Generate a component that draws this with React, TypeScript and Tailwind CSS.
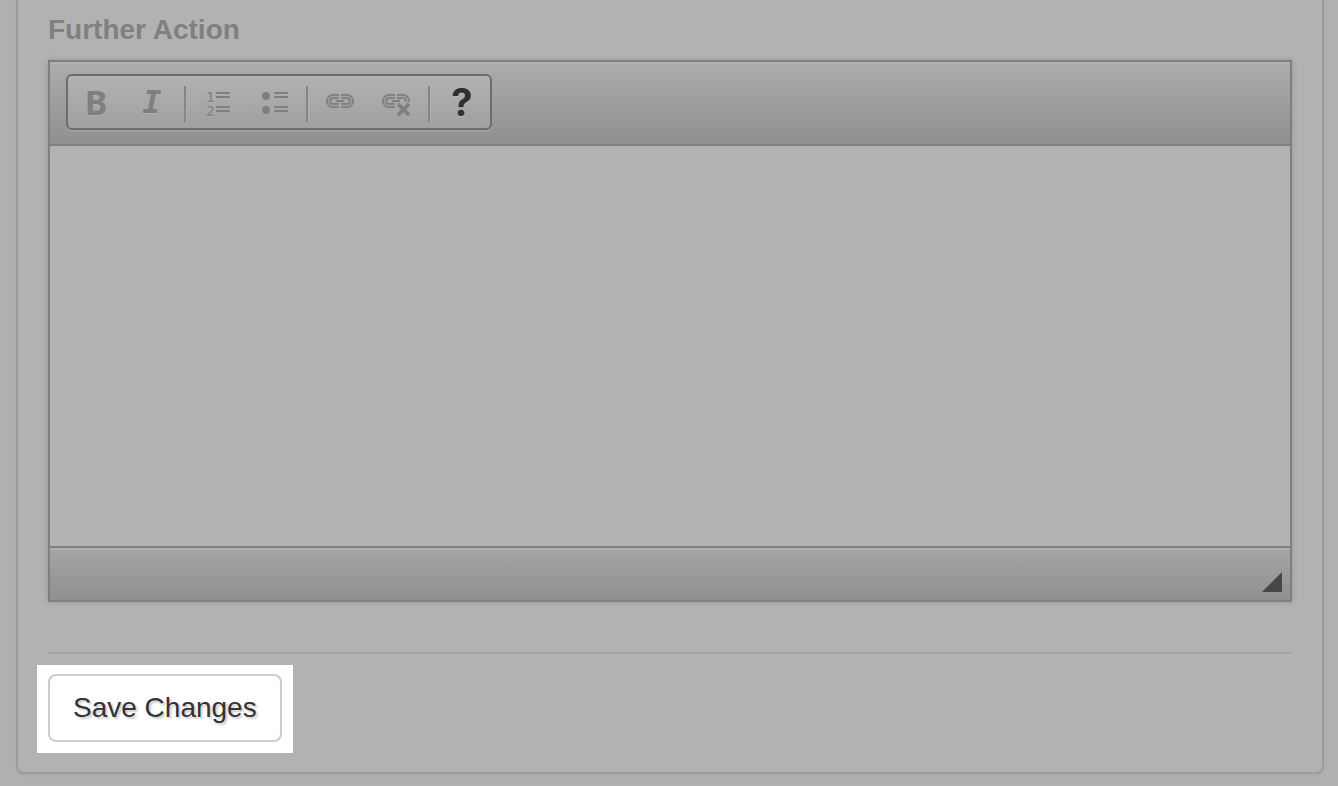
import type { ReactNode } from "react";

function ToolButton({ label, children, active = false }: { label: string; children: ReactNode; active?: boolean }) {
  return (
    <button
      type="button"
      aria-label={label}
      title={label}
      className={
        active
          ? "flex h-full w-14 items-center justify-center text-[#2f2f2f] [text-shadow:0_1px_0_#b8b8b8]"
          : "flex h-full w-14 items-center justify-center text-[#7f7f7f] [text-shadow:0_1px_0_#b0b0b0]"
      }
    >
      {children}
    </button>
  );
}

function Separator() {
  return <span className="mx-1 mb-1.5 h-9 w-0.5 self-end bg-[#858585] shadow-[1px_0_0_#b0b0b0]" />;
}

function ListLines() {
  return <path d="M14 7h14M14 11h14M14 21h14M14 25h14" />;
}

function NumberedListIcon() {
  return (
    <svg viewBox="0 0 32 32" className="size-8 overflow-visible" fill="none" stroke="currentColor" strokeWidth="2">
      <ListLines />
      <g fill="currentColor" stroke="none" fontFamily="DejaVu Sans Mono, monospace" fontSize="14">
        <text x="4" y="16">1</text>
        <text x="4" y="30">2</text>
      </g>
    </svg>
  );
}

function BulletedListIcon() {
  return (
    <svg viewBox="0 0 32 32" className="size-8" fill="none" stroke="currentColor" strokeWidth="2">
      <g transform="translate(2 0)">
        <ListLines />
      </g>
      <circle cx="8" cy="10" r="4" fill="currentColor" stroke="none" />
      <circle cx="8" cy="24" r="4" fill="currentColor" stroke="none" />
    </svg>
  );
}

const LINK_LEFT = "M15 10.5H9a4.5 4.5 0 0 0 0 9h6";

function LinkIcon() {
  const right = "M17 10.5h6a4.5 4.5 0 0 1 0 9h-6";
  return (
    <svg viewBox="0 0 32 32" className="size-8" fill="none">
      <g stroke="currentColor" strokeWidth="5">
        <path d={LINK_LEFT} />
        <path d={right} />
      </g>
      <g stroke="#a2a2a2" strokeWidth="1.4">
        <path d={LINK_LEFT} />
        <path d={right} />
      </g>
      <path d="M12 15h8" stroke="currentColor" strokeWidth="2" />
    </svg>
  );
}

function UnlinkIcon() {
  const right = "M17 10.5h6a4.5 4.5 0 0 1 4.5 4.5v1";
  return (
    <svg viewBox="0 0 32 32" className="size-8" fill="none">
      <g stroke="currentColor" strokeWidth="5">
        <path d={LINK_LEFT} />
        <path d={right} />
      </g>
      <g stroke="#a2a2a2" strokeWidth="1.4">
        <path d={LINK_LEFT} />
        <path d={right} />
      </g>
      <path d="M12 15h8" stroke="currentColor" strokeWidth="2" />
      <path d="M18 18l11 11M29 18L18 29" stroke="#a5a5a5" strokeWidth="6" />
      <path d="M18 18l11 11M29 18L18 29" stroke="currentColor" strokeWidth="3.5" />
    </svg>
  );
}

export default function App() {
  return (
    <div className="min-h-screen bg-[#b0b0b0] pr-3.5 pb-3 pl-4 font-['Liberation_Sans',Arial,sans-serif]">
      <form
        className="rounded-b-lg border-2 border-t-0 border-[#9b9b9b] bg-[#b2b2b2] px-[30px] pb-[19px] shadow-[0_1px_3px_#a6a6a6]"
        onSubmit={(e) => e.preventDefault()}
      >
        <label htmlFor="further-action" className="block pt-3 text-[28px] leading-9 font-bold text-[#808080]">
          Further Action
        </label>

        <div className="mt-3 border-2 border-[#7f7f7f] shadow-[0_0_6px_#00000026]">
          <div className="border-b-2 border-[#7f7f7f] bg-linear-to-b from-[#acacac] to-[#909090] px-4 pt-3 pb-3.5 shadow-[inset_0_2px_0_#b2b2b2]">
            <div
              role="toolbar"
              aria-label="Formatting"
              className="flex h-14 w-fit items-center rounded-md border-2 border-[#6d6d6d] bg-linear-to-b from-[#b2b2b2] to-[#a0a0a0] shadow-[0_2px_0_#a0a0a0]"
            >
              <ToolButton label="Bold">
                <span className="font-['Noto_Sans',sans-serif] text-[34px] leading-8 font-bold">B</span>
              </ToolButton>
              <ToolButton label="Italic">
                <span className="font-['DejaVu_Sans_Mono',monospace] text-[32px] leading-8 font-bold italic">I</span>
              </ToolButton>
              <Separator />
              <ToolButton label="Insert numbered list">
                <NumberedListIcon />
              </ToolButton>
              <ToolButton label="Insert bulleted list">
                <BulletedListIcon />
              </ToolButton>
              <Separator />
              <ToolButton label="Link">
                <LinkIcon />
              </ToolButton>
              <ToolButton label="Unlink">
                <UnlinkIcon />
              </ToolButton>
              <Separator />
              <ToolButton label="Help" active>
                <span className="font-['Inter',sans-serif] text-[38px] leading-8 font-bold">?</span>
              </ToolButton>
            </div>
          </div>
          <textarea
            id="further-action"
            className="block h-[400px] w-full resize-none bg-[#b2b2b2] p-5 text-[26px] text-[#333333] outline-none"
          />
          <div className="flex h-[54px] items-end justify-end border-t-2 border-[#7f7f7f] bg-linear-to-b from-[#a5a5a5] to-[#909090] p-2 shadow-[inset_0_2px_0_#b0b0b0]">
            <svg viewBox="0 0 20 20" className="size-5" aria-hidden="true">
              <path d="M20 0v20H0z" fill="#464646" />
            </svg>
          </div>
        </div>

        <hr className="mt-[50px] border-t-2 border-[#a6a6a6]" />

        <div className="-ml-[11px] mt-[11px] w-fit bg-white pt-[9px] pr-[11px] pb-[11px] pl-[11px]">
          <button
            type="submit"
            className="block h-[68px] rounded-lg border-2 border-[#cccccc] bg-white px-[23px] text-[28px] text-[#333333] [text-shadow:2px_2px_2px_#00000033]"
          >
            Save Changes
          </button>
        </div>
      </form>
    </div>
  );
}
